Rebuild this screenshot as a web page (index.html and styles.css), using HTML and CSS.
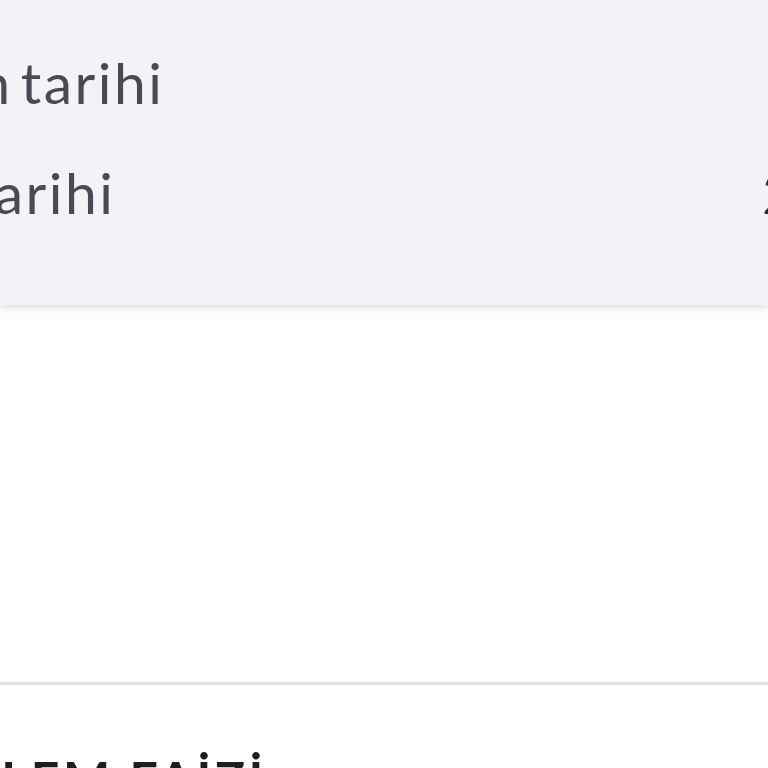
FILE: index.html
```html
<!DOCTYPE html>
<html lang="tr">
<head>
<meta charset="utf-8">
<link rel="stylesheet" href="styles.css">
</head>
<body>
<div class="screen">
  <section class="panel">
    <div class="row row-first">
      <span class="label">İşlem tarihi</span>
      <span class="value">21.06.2023</span>
    </div>
    <div class="row row-second">
      <span class="label">Vade tarihi</span>
      <span class="value">21.07.2023</span>
    </div>
  </section>
  <div class="spacer"></div>
  <hr class="divider">
  <h2 class="section-title">İŞLEM FAİZİ</h2>
</div>
</body>
</html>
```
FILE: styles.css
```css
html, body {
  margin: 0;
  padding: 0;
  background: #ffffff;
}
body {
  width: 768px;
  height: 768px;
  overflow: hidden;
  font-family: Lato, "Noto Sans", sans-serif;
}
.screen {
  width: 768px;
  height: 768px;
  overflow: hidden;
  display: flex;
  flex-direction: column;
}
.panel {
  flex: 0 0 305px;
  background: #f3f3f7;
  box-shadow: 0 3px 7px rgba(0, 0, 0, 0.13);
  position: relative;
  z-index: 1;
  display: flex;
  flex-direction: column;
}
.row {
  display: flex;
  align-items: baseline;
  font-size: 57px;
  line-height: 110px;
  letter-spacing: 2.5px;
  color: #4a4a52;
  white-space: nowrap;
}
.row-first {
  margin-top: 27px;
  margin-left: -130px;
  word-spacing: -9px;
}
.row-second {
  margin-left: -180px;
}
.label {
  overflow: hidden;
}
.row-first .label { flex: 0 0 970px; }
.row-second .label { flex: 0 0 942px; }
.row-second .value { color: #2e2e34; }
.spacer {
  flex: 0 0 377px;
}
.divider {
  margin: 0;
  border: 0;
  height: 3px;
  background: #e2e2e4;
  flex: 0 0 3px;
}
.section-title {
  margin: 64px 0 0 -48px;
  font-size: 50px;
  line-height: 60px;
  font-weight: 700;
  color: #1e1e22;
  letter-spacing: 3.5px;
  white-space: nowrap;
}
```
